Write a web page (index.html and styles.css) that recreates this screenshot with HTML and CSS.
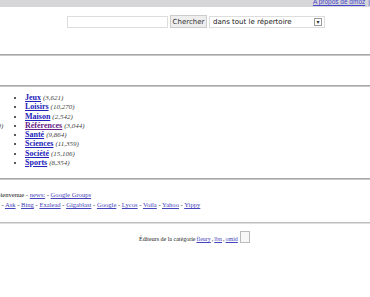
FILE: index.html
```html
<!DOCTYPE html>
<html lang="fr">
<head>
    <meta charset="UTF-8">
    <title>Open Directory - World: Français</title>
    <link rel="stylesheet" href="styles.css">
</head>
<body>
    <div class="topbar">
        <a href="#">A propos de dmoz</a>
        <span class="sep">|</span>
        <a href="#">Aide</a>
    </div>

    <form class="search">
        <input type="text" class="q">
        <button type="button" class="go">Chercher</button>
        <div class="where">
            <span>dans tout le répertoire</span>
            <span class="arrow">&#9662;</span>
        </div>
    </form>

    <hr class="rule">
    <div class="spacer"></div>
    <hr class="rule">

    <div class="dir">
        <ul class="col col-left">
            <li><a href="#">Arts</a> <em>(16,402)</em></li>
            <li><a href="#">Actualités</a> <em>(1,215)</em></li>
            <li><a href="#">Informatique</a> <em>(7,140)</em></li>
            <li><a href="#">Commerce et économie</a> <em>(23,960)</em></li>
            <li><a href="#">Enfants</a> <em>(2,390)</em></li>
            <li><a href="#">Régional</a> <em>(131,740)</em></li>
        </ul>
        <ul class="col">
            <li><a href="#">Jeux</a> <em>(3,621)</em></li>
            <li><a href="#">Loisirs</a> <em>(10,270)</em></li>
            <li><a href="#">Maison</a> <em>(2,542)</em></li>
            <li><a href="#" class="seen">Références</a> <em>(3,044)</em></li>
            <li><a href="#">Santé</a> <em>(9,864)</em></li>
            <li><a href="#">Sciences</a> <em>(11,359)</em></li>
            <li><a href="#">Société</a> <em>(15,106)</em></li>
            <li><a href="#">Sports</a> <em>(8,354)</em></li>
        </ul>
    </div>

    <hr class="rule">

    <div class="more">
        <p>Bienvenue - <a href="#">news:</a> - <a href="#">Google Groups</a></p>
        <p>Recherche - <a href="#">Ask</a> - <a href="#">Bing</a> - <a href="#">Exalead</a> - <a href="#">Gigablast</a> - <a href="#">Google</a> - <a href="#">Lycos</a> - <a href="#">Voila</a> - <a href="#">Yahoo</a> - <a href="#">Yippy</a></p>
    </div>

    <hr class="rule light">

    <p class="editors">Éditeurs de la catégorie <a href="#">fleury</a>, <a href="#">lbn</a>, <a href="#">omid</a><span class="msg"></span></p>
</body>
</html>
```

FILE: styles.css
```css
body {
    margin: 0;
    background: #fff;
    font-family: "Liberation Serif", "Times New Roman", serif;
    color: #222;
    overflow: hidden;
}
a { color: #33c; }

.topbar {
    height: 7px;
    background: #d6d6d8;
    display: flex;
    justify-content: flex-end;
    gap: 3px;
    overflow: hidden;
    font-family: "Liberation Sans", Arial, sans-serif;
    font-size: 6.5px;
    line-height: 7px;
    margin-right: -16px;
}
.topbar a, .topbar .sep { margin-top: -2px; color: #44c; }

.search {
    display: flex;
    align-items: flex-start;
    gap: 2px;
    margin: 8px 0 0 67px;
    font-family: "DejaVu Sans", Tahoma, sans-serif;
    font-size: 7px;
}
.q {
    width: 101px;
    height: 12px;
    margin: 1px 0 0;
    padding: 0;
    box-sizing: border-box;
    border: 1px solid #ddd;
    background: #fff;
}
.go {
    width: 37px;
    height: 13px;
    padding: 0;
    font: inherit;
    color: #333;
    background: #eee;
    border: 1px solid #ccc;
}
.where {
    width: 116px;
    height: 12px;
    margin-top: 1px;
    box-sizing: border-box;
    border: 1px solid #ddd;
    display: flex;
    align-items: center;
    justify-content: space-between;
    padding: 0 2px 0 3px;
    color: #222;
}
.arrow {
    width: 6px;
    height: 6px;
    border: 1px solid #999;
    font-size: 6px;
    line-height: 6px;
    text-align: center;
    color: #333;
}

.rule {
    margin: 0;
    border: 0;
    border-top: 1px solid #a8a8a8;
    border-bottom: 1px solid #c8c8c8;
}
.rule:first-of-type { margin-top: 26px; }
.spacer { height: 29px; }
.rule.light { border-top-color: #c0c0c0; border-bottom-color: #dedede; }

.dir {
    display: flex;
    padding: 6px 0 11px;
    margin-left: -127px;
}
.col {
    margin: 0;
    padding: 0 0 0 25px;
    font-size: 8px;
    list-style: disc;
    white-space: nowrap;
}
.col li { height: 9.3px; line-height: 9.3px; }
.col-left { width: 127px; box-sizing: border-box; }
.col a { font-weight: bold; color: #2222bb; }
.col a.seen { color: #662288; }
.col em { color: #444; font-size: 7px; }

.more {
    padding: 10px 0 12px;
    font-size: 6.6px;
    line-height: 10px;
    margin-left: -4px;
    white-space: nowrap;
}
.more p { margin: 0; }
.more p + p { margin-left: -24px; }
.more a { color: #44b; }

.editors {
    margin: 12px 0 0 139px;
    font-size: 6px;
    display: flex;
    align-items: flex-start;
}
.editors a { color: #44b; margin: 0 1px; }
.msg {
    width: 8px;
    height: 10px;
    margin: -5px 0 0 1px;
    border: 1px solid #bbb;
    background: #f7f7f7;
}
```
